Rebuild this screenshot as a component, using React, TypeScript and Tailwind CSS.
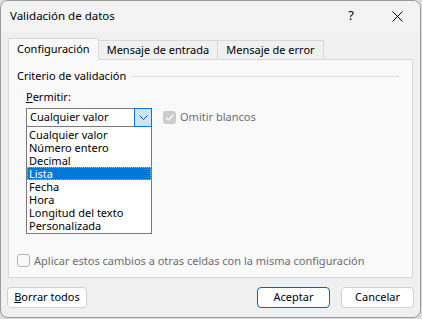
import * as React from "react";

const OPTIONS = [
  "Cualquier valor",
  "Número entero",
  "Decimal",
  "Lista",
  "Fecha",
  "Hora",
  "Longitud del texto",
  "Personalizada",
];

export default function App() {
  return (
    <div className="w-[422px] h-[319px] bg-[#dcdcdc] font-['Segoe_UI','Noto_Sans',sans-serif] text-[11px] text-black">
      <div className="w-[421px] h-[318px] rounded-lg border border-[#9a9a9a] bg-[#f0f0f0] overflow-hidden flex flex-col">
        {/* title bar */}
        <div className="h-[30px] bg-[#f3f3f3] flex items-center pl-[9px]">
          <span className="flex-1 text-[11.5px]">Validación de datos</span>
          <span className="w-[46px] text-center text-[13px]">?</span>
          <span className="w-[46px] flex justify-center">
            <svg width="11" height="11" viewBox="0 0 11 11">
              <path d="M0.5 0.5 L10.5 10.5 M10.5 0.5 L0.5 10.5" stroke="#000" strokeWidth="1" />
            </svg>
          </span>
        </div>

        {/* tabs */}
        <div className="flex px-[7px] pt-[7px] h-[28px] items-end">
          <div className="h-[22px] px-[8px] bg-[#f9f9f9] border border-b-0 border-[#d9d9d9] flex items-center relative top-[1px] z-10">
            Configuración
          </div>
          <div className="h-[19px] px-[8px] bg-[#f0f0f0] border border-l-0 border-b-0 border-[#d9d9d9] flex items-center">
            Mensaje de entrada
          </div>
          <div className="h-[19px] px-[8px] bg-[#f0f0f0] border border-l-0 border-b-0 border-[#d9d9d9] flex items-center">
            Mensaje de error
          </div>
        </div>

        {/* panel */}
        <div className="mx-[7px] h-[219px] bg-[#f9f9f9] border border-[#d9d9d9] px-[8px] pt-[8px] flex flex-col">
          <div className="h-[16px] flex items-center gap-[6px] pr-[5px]">
            <span>Criterio de validación</span>
            <div className="flex-1 h-px bg-[#dcdcdc]" />
          </div>
          <div className="h-[14px] pl-[9px] mt-[6px] flex items-center">
            <span>
              <span className="underline">P</span>ermitir:
            </span>
          </div>
          <div className="flex pl-[9px] mt-[4px] items-start">
            <div className="flex flex-col w-[126px]">
              <div className="h-[19px] border border-[#7a7a7a] bg-white flex items-center">
                <span className="flex-1 pl-[3px]">Cualquier valor</span>
                <span className="w-[18px] h-[19px] -mr-px -mt-px border border-[#0078d4] bg-[#cce4f7] flex items-center justify-center">
                  <svg width="9" height="5" viewBox="0 0 9 5">
                    <path d="M0.5 0.5 L4.5 4.5 L8.5 0.5" stroke="#404040" fill="none" strokeWidth="1" />
                  </svg>
                </span>
              </div>
              <div className="border border-[#7a7a7a] border-t-0 bg-white flex flex-col pt-[1px] pb-[1px]">
                {OPTIONS.map((o) => (
                  <div
                    key={o}
                    className={
                      o === "Lista"
                        ? "h-[13px] leading-[13px] pl-[2px] bg-[#0078d7] text-white outline-dotted outline-1 outline-[#f5a040] -outline-offset-1"
                        : "h-[13px] leading-[13px] pl-[2px]"
                    }
                  >
                    {o}
                  </div>
                ))}
              </div>
            </div>
            <div className="flex items-center ml-[11px] mt-[1px] gap-[4px] text-[#6d6d6d]">
              <span className="w-[13px] h-[13px] rounded-[3px] bg-[#cccccc] flex items-center justify-center">
                <svg width="9" height="7" viewBox="0 0 9 7">
                  <path d="M1 3.5 L3.5 6 L8 1" stroke="#ffffff" fill="none" strokeWidth="1.2" />
                </svg>
              </span>
              <span>Omitir blancos</span>
            </div>
          </div>
          <div className="flex items-center gap-[4px] mt-auto mb-[8px] text-[#6d6d6d]">
            <span className="w-[13px] h-[13px] rounded-[3px] border border-[#b5b5b5] bg-[#f9f9f9]" />
            <span>Aplicar estos cambios a otras celdas con la misma configuración</span>
          </div>
        </div>

        {/* buttons */}
        <div className="flex items-center px-[6px] mt-[9px]">
          <button className="w-[80px] h-[21px] rounded-[4px] border border-[#d0d0d0] bg-white text-[11px]">
            <span className="underline">B</span>orrar todos
          </button>
          <div className="flex-1" />
          <button className="w-[73px] h-[21px] rounded-[4px] border border-[#0067c0] bg-white text-[11px]">
            Aceptar
          </button>
          <button className="w-[73px] h-[21px] ml-[11px] rounded-[4px] border border-[#d0d0d0] bg-white text-[11px]">
            Cancelar
          </button>
        </div>
      </div>
    </div>
  );
}
